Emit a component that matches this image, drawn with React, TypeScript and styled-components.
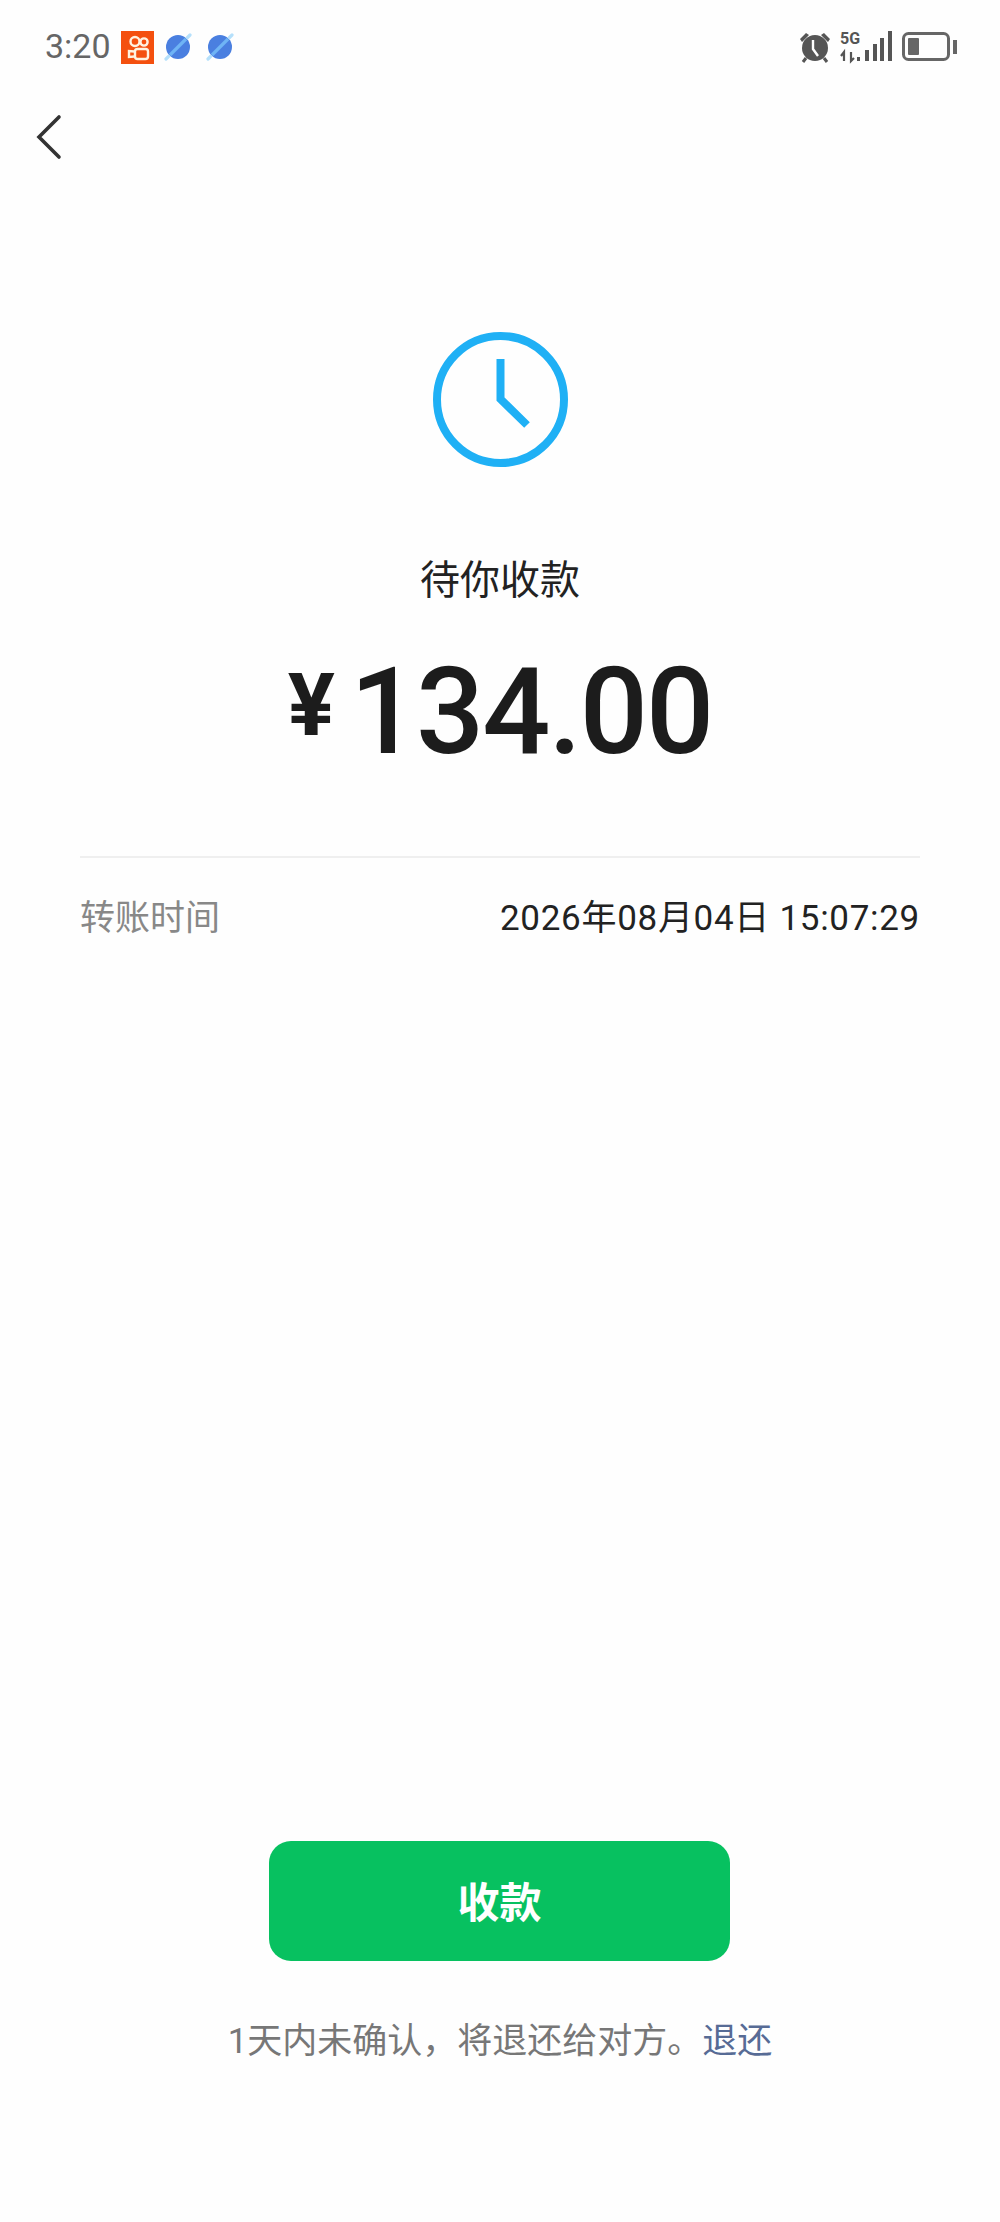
import React from "react";
import styled, { createGlobalStyle } from "styled-components";

const GlobalStyle = createGlobalStyle`
  html, body {
    margin: 0;
    padding: 0;
    background: #fefefe;
  }
  * {
    box-sizing: border-box;
  }
`;

const Page = styled.div`
  width: 1000px;
  height: 2222px;
  display: flex;
  flex-direction: column;
  background: #fefefe;
  font-family: Roboto, "Noto Sans CJK SC", sans-serif;
`;

const StatusBar = styled.div`
  height: 94px;
  padding: 0 43px 0 45px;
  display: flex;
  align-items: center;
  justify-content: space-between;
`;

const StatusGroup = styled.div`
  display: flex;
  align-items: center;
  gap: ${(p: { $gap: number }) => p.$gap}px;
`;

const Time = styled.span`
  font-size: 34px;
  color: #666;
  margin-bottom: 3px;
  line-height: 1;
`;

const NavBar = styled.div`
  height: 86px;
  padding-left: 34px;
  display: flex;
  align-items: center;
`;

const Hero = styled.div`
  padding-top: 152px;
  display: flex;
  flex-direction: column;
  align-items: center;
`;

const Title = styled.div`
  margin-top: 90px;
  font-size: 40px;
  line-height: 48px;
  color: #222;
`;

const Amount = styled.div`
  margin-top: 47px;
  display: flex;
  align-items: flex-start;
  color: #1c1c1c;
  font-weight: 500;
  line-height: 120px;
`;

const Currency = styled.span`
  font-size: 88px;
  font-weight: 700;
  line-height: 105px;
  margin-right: 15px;
`;

const Digits = styled.span`
  font-size: 120px;
  letter-spacing: -2px;
`;

const Divider = styled.div`
  margin: 84px 80px 0;
  height: 2px;
  background: #efefef;
`;

const InfoRow = styled.div`
  margin: 40px 80px 0;
  display: flex;
  justify-content: space-between;
  align-items: center;
  font-size: 35px;
  line-height: 42px;
`;

const InfoLabel = styled.span`
  color: #888;
`;

const InfoValue = styled.span`
  color: #222;
  letter-spacing: 0.7px;
`;

const Spacer = styled.div`
  flex: 1;
`;

const Footer = styled.div`
  display: flex;
  flex-direction: column;
  align-items: center;
  padding-bottom: 159px;
`;

const PrimaryButton = styled.button`
  width: 461px;
  height: 120px;
  margin-right: 1px;
  padding: 0 0 4px;
  border: 0;
  border-radius: 22px;
  background: #07c160;
  color: #fff;
  font-family: inherit;
  font-size: 42px;
  font-weight: 700;
`;

const Notice = styled.div`
  margin-top: 60px;
  font-size: 35px;
  line-height: 42px;
  color: #777;
`;

const NoticeLink = styled.span`
  color: #576b95;
`;

const KuaishouIcon = () => (
  <svg width="33" height="33" viewBox="0 0 33 33">
    <rect width="33" height="33" fill="#f4500f" />
    <g fill="none" stroke="#fff2e0" strokeWidth="2.4">
      <circle cx="14" cy="10.5" r="4.5" />
      <circle cx="23" cy="11" r="3.6" />
      <rect x="14" y="18" width="13" height="10" rx="2.5" />
      <path d="M13.5 20.5 L8 20 L8 26 L13.5 25.5" />
    </g>
  </svg>
);

const PlanetIcon = () => (
  <svg width="28" height="28" viewBox="0 0 28 28">
    <circle cx="14" cy="14" r="12" fill="#4a7fe0" />
    <path d="M6 22 L22 6" stroke="#6fb4f5" strokeWidth="3.2" />
    <path d="M2 26 L4.5 23.5 M26 2 L23.5 4.5" stroke="#b5e0fb" strokeWidth="3.2" strokeLinecap="round" />
  </svg>
);

const AlarmIcon = () => (
  <svg width="34" height="32" viewBox="0 0 34 32">
    <circle cx="17" cy="17" r="13" fill="#555" />
    <path d="M2 8 L8 2 L11 4 L4 11 Z M32 8 L26 2 L23 4 L30 11 Z" fill="#555" />
    <path d="M8 27 L5 31 M26 27 L29 31" stroke="#555" strokeWidth="3" />
    <path d="M15 9 L15 18 L20 25" fill="none" stroke="#fefefe" strokeWidth="2.4" />
  </svg>
);

const SignalIcon = () => (
  <svg width="54" height="36" viewBox="0 -2 54 36">
    <text x="0" y="13" fontFamily="Roboto, sans-serif" fontSize="16" fontWeight="700" fill="#555">
      5G
    </text>
    <path d="M4 30 L4 21 L1 25 M11 21 L11 30 L14 27" fill="none" stroke="#555" strokeWidth="2.2" />
    <rect x="17" y="26" width="3" height="4" fill="#555" />
    <rect x="25" y="19" width="4" height="11" fill="#555" />
    <rect x="33" y="13" width="4" height="17" fill="#555" />
    <rect x="40" y="7" width="4" height="23" fill="#555" />
    <rect x="48" y="0" width="4" height="30" fill="#555" />
  </svg>
);

const BatteryIcon = () => (
  <svg width="55" height="30" viewBox="0 0 55 30">
    <rect x="1.5" y="1.5" width="45" height="26" rx="5" fill="none" stroke="#666" strokeWidth="3" />
    <rect x="6" y="6" width="11" height="17" rx="1" fill="#666" />
    <rect x="51" y="8" width="4" height="14" fill="#666" />
  </svg>
);

const BackIcon = () => (
  <svg width="28" height="46" viewBox="0 0 28 46">
    <path d="M25 3 L5 23 L25 43" fill="none" stroke="#333" strokeWidth="3.6" strokeLinecap="round" strokeLinejoin="miter" />
  </svg>
);

const ClockIcon = () => (
  <svg width="135" height="135" viewBox="0 0 135 135">
    <circle cx="67.5" cy="67.5" r="63.5" fill="none" stroke="#1fb0f5" strokeWidth="8" />
    <path d="M67.5 27 L67.5 67 L94 93" fill="none" stroke="#1fb0f5" strokeWidth="8" />
  </svg>
);

const App = () => {
  return (
    <Page>
      <GlobalStyle />
      <StatusBar>
        <StatusGroup $gap={10}>
          <Time>3:20</Time>
          <KuaishouIcon />
          <StatusGroup $gap={14}>
            <PlanetIcon />
            <PlanetIcon />
          </StatusGroup>
        </StatusGroup>
        <StatusGroup $gap={8}>
          <AlarmIcon />
          <SignalIcon />
          <BatteryIcon />
        </StatusGroup>
      </StatusBar>
      <NavBar>
        <BackIcon />
      </NavBar>
      <Hero>
        <ClockIcon />
        <Title>待你收款</Title>
        <Amount>
          <Currency>¥</Currency>
          <Digits>134.00</Digits>
        </Amount>
      </Hero>
      <Divider />
      <InfoRow>
        <InfoLabel>转账时间</InfoLabel>
        <InfoValue>2026年08月04日 15:07:29</InfoValue>
      </InfoRow>
      <Spacer />
      <Footer>
        <PrimaryButton>收款</PrimaryButton>
        <Notice>
          1天内未确认，将退还给对方。<NoticeLink>退还</NoticeLink>
        </Notice>
      </Footer>
    </Page>
  );
};

export default App;
